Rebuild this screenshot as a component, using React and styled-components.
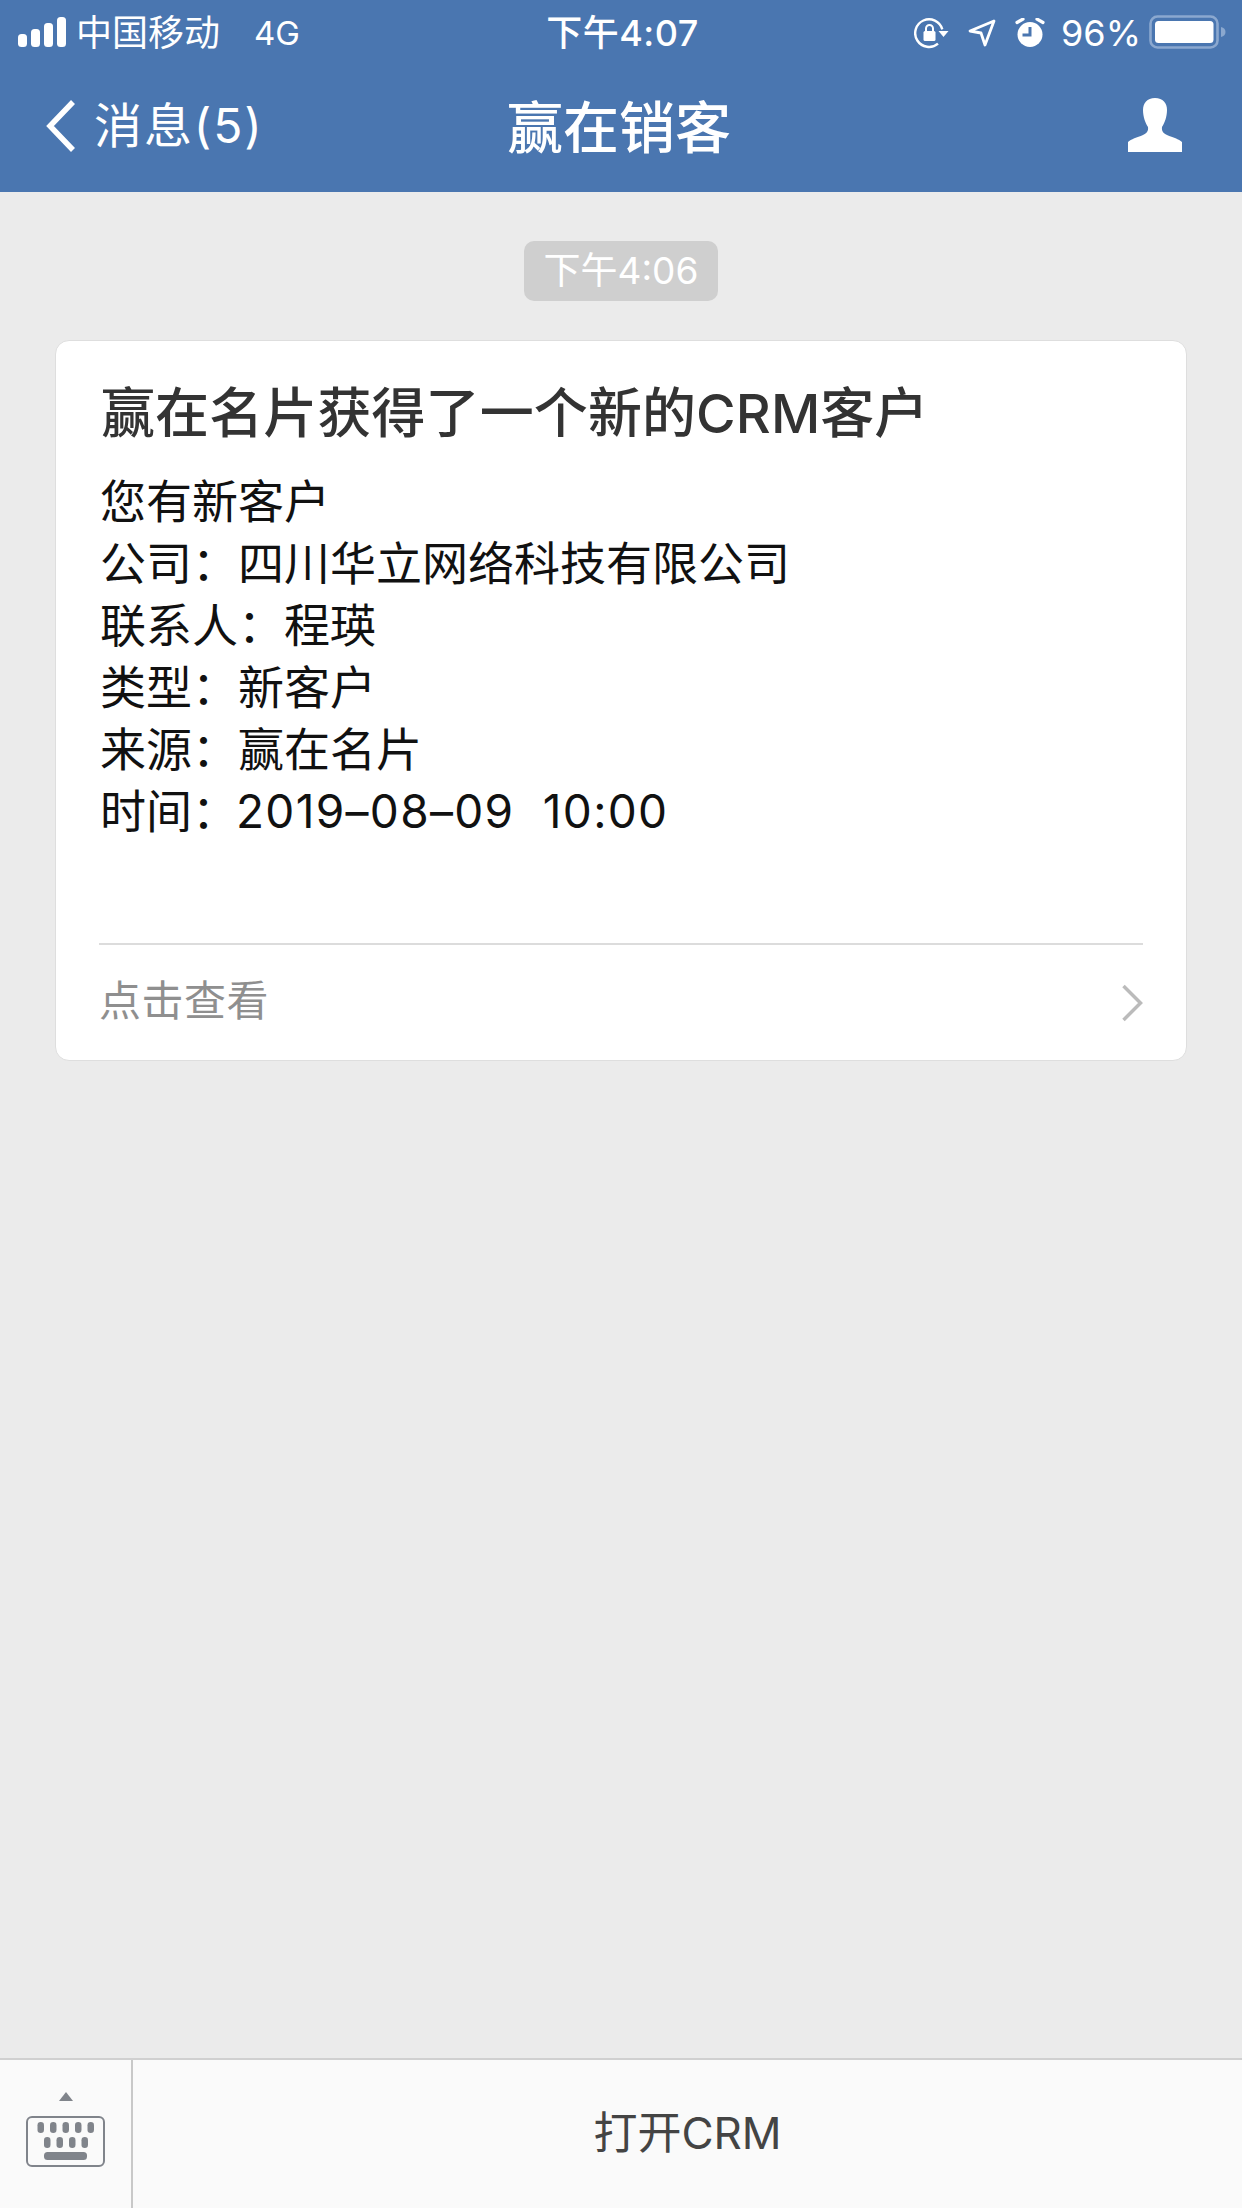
import React from "react";
import styled, { createGlobalStyle } from "styled-components";

const FONT = `Inter, "Noto Sans CJK SC", sans-serif`;

const Global = createGlobalStyle`
  html, body { margin: 0; padding: 0; background: #ebebeb; }
  * { box-sizing: border-box; }
`;

const Page = styled.div`
  width: 1242px;
  height: 2208px;
  display: flex;
  flex-direction: column;
  font-family: ${FONT};
  background: #ebebeb;
  overflow: hidden;
`;

const Header = styled.header`
  height: 192px;
  flex: none;
  background: #4a76b0;
  color: #fff;
  display: flex;
  flex-direction: column;
`;

const StatusBar = styled.div`
  height: 60px;
  padding: 0 15px 0 18px;
  display: grid;
  grid-template-columns: 1fr auto 1fr;
  align-items: center;
`;

const StatusLeft = styled.div`
  display: flex;
  align-items: center;
`;

const Carrier = styled.span`
  font-size: 36px;
  line-height: 60px;
  margin-left: 9px;
  padding-top: 3px;
`;

const Network = styled.span`
  font-size: 33px;
  line-height: 60px;
  margin-left: 34px;
  padding-top: 3px;
`;

const Clock = styled.span`
  font-size: 36px;
  font-weight: 500;
  line-height: 60px;
  padding-top: 3px;
  letter-spacing: 0.5px;
`;

const StatusRight = styled.div`
  display: flex;
  align-items: center;
  justify-content: flex-end;
`;

const Percent = styled.span`
  font-size: 36px;
  line-height: 60px;
  margin: 0 8px 0 16px;
  padding-top: 3px;
`;

const StatusIcon = styled.svg`
  display: block;
  margin-top: 2px;
  margin-right: ${(p) => p.$gap || 0}px;
`;

const NavBar = styled.div`
  height: 132px;
  padding: 0 60px 0 46px;
  display: grid;
  grid-template-columns: 1fr auto 1fr;
  align-items: center;
`;

const BackLink = styled.div`
  display: flex;
  align-items: center;
  gap: 18px;
  font-size: 48px;
`;

const BackLabel = styled.span`
  line-height: 66px;
  letter-spacing: 1.9px;
`;

const NavTitle = styled.div`
  font-size: 56px;
  font-weight: 500;
  line-height: 66px;
  padding-top: 3px;
  transform: translateX(5px);
`;

const NavAction = styled.div`
  display: flex;
  justify-content: flex-end;
  padding-bottom: 2px;
`;

const Main = styled.main`
  flex: 1;
  padding: 49px 55px 0;
  display: flex;
  flex-direction: column;
  align-items: center;
`;

const TimePill = styled.div`
  width: 194px;
  height: 60px;
  border-radius: 10px;
  background: #cfcfcf;
  color: #fff;
  font-size: 37px;
  line-height: 60px;
  text-align: center;
`;

const Card = styled.article`
  margin-top: 39px;
  width: 100%;
  height: 721px;
  background: #fff;
  border: 1px solid #dedede;
  border-radius: 14px;
  padding: 0 43px;
  display: flex;
  flex-direction: column;
`;

const CardTitle = styled.h2`
  margin: 41px 0 0 2px;
  font-size: 54px;
  font-weight: 500;
  line-height: 64px;
  color: #333333;
  white-space: nowrap;
  letter-spacing: 0.1px;
`;

const CardBody = styled.div`
  margin: 24px 0 0 1px;
  height: 372px;
  font-size: 46px;
  line-height: 62px;
  color: #111111;
`;

const BodyLine = styled.div`
  white-space: pre;
`;

const DateText = styled.span`
  margin-left: -2px;
  letter-spacing: 1.3px;
`;

const CardFooter = styled.div`
  margin-top: 101px;
  border-top: 2px solid #dcdcdc;
  flex: 1;
  display: flex;
  align-items: center;
  justify-content: space-between;
  color: #8f8f8f;
  font-size: 42px;
`;

const FooterLabel = styled.span`
  line-height: 50px;
  margin-bottom: 4px;
  letter-spacing: 0.5px;
`;

const Bottom = styled.footer`
  flex: none;
  height: 150px;
  background: #fafafa;
  border-top: 2px solid #d0d0d0;
  display: flex;
`;

const KeyboardToggle = styled.div`
  flex: none;
  width: 133px;
  border-right: 2px solid #c8c8c8;
  display: flex;
  justify-content: center;
  padding-top: 32px;
`;

const MenuButton = styled.div`
  flex: 1;
  display: flex;
  align-items: center;
  justify-content: center;
  font-size: 44px;
  color: #444444;
  padding-bottom: 8px;
`;

const Signal = () => (
  <svg width="49" height="30" viewBox="0 0 49 30" fill="#fff">
    <rect x="0" y="17" width="9" height="13" rx="3.500" />
    <rect x="13" y="12" width="9" height="18" rx="3.500" />
    <rect x="26" y="6" width="9" height="24" rx="3.500" />
    <rect x="39" y="0" width="9" height="30" rx="3.500" />
  </svg>
);

const RotationLock = () => (
  <StatusIcon $gap={17} width="36" height="32" viewBox="0 0 36 32" fill="none">
    <path d="M24 26.600A13.800 13.800 0 1 1 28.300 12.400" stroke="#fff" strokeWidth="2.400" />
    <path d="M24.500 14h10l-5 6z" fill="#fff" />
    <rect x="9.500" y="14" width="12" height="10" rx="1.500" fill="#fff" />
    <path d="M12 14v-2.500a3.500 3.500 0 0 1 7 0v2.500" stroke="#fff" strokeWidth="2" />
  </StatusIcon>
);

const LocationArrow = () => (
  <StatusIcon $gap={19} width="29" height="30" viewBox="0 0 29 30" fill="none">
    <path d="M27 3 L3 13 L14 15 L18 27 Z" stroke="#fff" strokeWidth="2.800" strokeLinejoin="round" />
  </StatusIcon>
);

const Alarm = () => (
  <StatusIcon width="30" height="30" viewBox="0 0 30 30">
    <circle cx="15" cy="16.500" r="12.500" fill="#fff" />
    <path d="M15 9v8H7.500" stroke="#4a76b0" strokeWidth="3" fill="none" />
    <path d="M2 4.500l6-3.500M28 4.500l-6-3.500" stroke="#fff" strokeWidth="3.200" strokeLinecap="round" />
  </StatusIcon>
);

const Battery = () => (
  <svg width="78" height="34" viewBox="0 0 78 34">
    <rect x="1.500" y="1.500" width="67" height="31" rx="7" fill="none" stroke="#8ba8cf" strokeWidth="2.600" />
    <rect x="6" y="6" width="58.500" height="22" rx="3.500" fill="#fff" />
    <path d="M72 12c3 .5 4.500 2.500 4.500 5s-1.500 4.500-4.500 5z" fill="#8ba8cf" />
  </svg>
);

const BackChevron = () => (
  <svg width="30" height="54" viewBox="0 0 30 54" fill="none">
    <path d="M27 3 L4 27 L27 51" stroke="#fff" strokeWidth="5.500" />
  </svg>
);

const Person = () => (
  <svg width="54" height="54" viewBox="0 0 54 54" fill="#fff">
    <path d="M27 0C19 0 15 5 15 12C15 19 17.500 25 20 29C20.500 33 19 35 15 37C9 39.500 3 41 0 44V54H54V44C51 41 45 39.500 39 37C35 35 33.500 33 34 29C36.500 25 39 19 39 12C39 5 35 0 27 0Z" />
  </svg>
);

const RightChevron = () => (
  <svg width="22" height="38" viewBox="0 0 22 38" fill="none">
    <path d="M2.500 2 L19.500 19 L2.500 36" stroke="#bbbbbb" strokeWidth="3.500" />
  </svg>
);

const Keyboard = () => (
  <svg width="80" height="76" viewBox="0 0 80 76">
    <path d="M33 9l7-9 7 9z" fill="#80848b" />
    <rect x="1" y="25" width="77" height="49" rx="5" fill="none" stroke="#80848b" strokeWidth="2" />
    {[11.5, 24, 36.5, 49, 61.5].map((x) => (
      <rect key={x} x={x} y="30" width="6.500" height="11" rx="3.200" fill="#80848b" />
    ))}
    {[18, 30.5, 43, 55.5].map((x) => (
      <rect key={x} x={x} y="45" width="6.500" height="11" rx="3.200" fill="#80848b" />
    ))}
    <rect x="18" y="60" width="43" height="8" rx="3.500" fill="#80848b" />
  </svg>
);

const LINES = [
  "您有新客户",
  "公司：四川华立网络科技有限公司",
  "联系人：程瑛",
  "类型：新客户",
  "来源：赢在名片",
];

export default function App() {
  return (
    <Page>
      <Global />
      <Header>
        <StatusBar>
          <StatusLeft>
            <Signal />
            <Carrier>中国移动</Carrier>
            <Network>4G</Network>
          </StatusLeft>
          <Clock>下午4:07</Clock>
          <StatusRight>
            <RotationLock />
            <LocationArrow />
            <Alarm />
            <Percent>96%</Percent>
            <Battery />
          </StatusRight>
        </StatusBar>
        <NavBar>
          <BackLink>
            <BackChevron />
            <BackLabel>消息(5)</BackLabel>
          </BackLink>
          <NavTitle>赢在销客</NavTitle>
          <NavAction>
            <Person />
          </NavAction>
        </NavBar>
      </Header>
      <Main>
        <TimePill>下午4:06</TimePill>
        <Card>
          <CardTitle>赢在名片获得了一个新的CRM客户</CardTitle>
          <CardBody>
            {LINES.map((line) => (
              <BodyLine key={line}>{line}</BodyLine>
            ))}
            <BodyLine>
              时间：<DateText>2019–08–09  10:00</DateText>
            </BodyLine>
          </CardBody>
          <CardFooter>
            <FooterLabel>点击查看</FooterLabel>
            <RightChevron />
          </CardFooter>
        </Card>
      </Main>
      <Bottom>
        <KeyboardToggle>
          <Keyboard />
        </KeyboardToggle>
        <MenuButton>打开CRM</MenuButton>
      </Bottom>
    </Page>
  );
}
